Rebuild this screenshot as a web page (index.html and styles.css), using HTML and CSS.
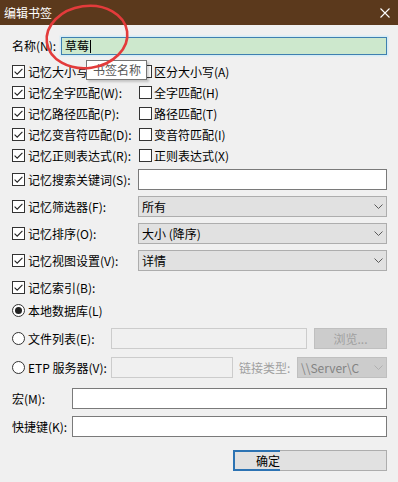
FILE: index.html
```html
<!DOCTYPE html>
<html lang="zh-CN">
<head>
<meta charset="utf-8">
<title>编辑书签</title>
<link rel="stylesheet" href="styles.css">
</head>
<body>
<div class="titlebar">
  <span class="title">编辑书签</span>
  <svg class="close" width="10" height="10" viewBox="0 0 10 10"><path d="M0.5 0.5 L9.5 9.5 M9.5 0.5 L0.5 9.5" stroke="#fff" stroke-width="1.1" fill="none"/></svg>
</div>
<div class="content">
  <div class="row name-row">
    <span class="lbl">名称(N):</span>
    <div class="field name-field"><span>草莓</span><span class="caret"></span></div>
  </div>

  <div class="row two">
    <div class="cbl"><span class="cb on"><svg viewBox="0 0 11 11"><path d="M1.6 5.6 L4.2 8.2 L9.4 2.8"/></svg></span><span>记忆大小写(C):</span></div>
    <div class="cbr"><span class="cb"></span><span>区分大小写(A)</span></div>
  </div>
  <div class="row two">
    <div class="cbl"><span class="cb on"><svg viewBox="0 0 11 11"><path d="M1.6 5.6 L4.2 8.2 L9.4 2.8"/></svg></span><span>记忆全字匹配(W):</span></div>
    <div class="cbr"><span class="cb"></span><span>全字匹配(H)</span></div>
  </div>
  <div class="row two">
    <div class="cbl"><span class="cb on"><svg viewBox="0 0 11 11"><path d="M1.6 5.6 L4.2 8.2 L9.4 2.8"/></svg></span><span>记忆路径匹配(P):</span></div>
    <div class="cbr"><span class="cb"></span><span>路径匹配(T)</span></div>
  </div>
  <div class="row two">
    <div class="cbl"><span class="cb on"><svg viewBox="0 0 11 11"><path d="M1.6 5.6 L4.2 8.2 L9.4 2.8"/></svg></span><span>记忆变音符匹配(D):</span></div>
    <div class="cbr"><span class="cb"></span><span>变音符匹配(I)</span></div>
  </div>
  <div class="row two">
    <div class="cbl"><span class="cb on"><svg viewBox="0 0 11 11"><path d="M1.6 5.6 L4.2 8.2 L9.4 2.8"/></svg></span><span>记忆正则表达式(R):</span></div>
    <div class="cbr"><span class="cb"></span><span>正则表达式(X)</span></div>
  </div>

  <div class="row two mt3">
    <div class="cbl"><span class="cb on"><svg viewBox="0 0 11 11"><path d="M1.6 5.6 L4.2 8.2 L9.4 2.8"/></svg></span><span>记忆搜索关键词(S):</span></div>
    <div class="field text-field"></div>
  </div>
  <div class="row two mt6">
    <div class="cbl"><span class="cb on"><svg viewBox="0 0 11 11"><path d="M1.6 5.6 L4.2 8.2 L9.4 2.8"/></svg></span><span>记忆筛选器(F):</span></div>
    <div class="select"><span>所有</span><svg class="chev" width="9" height="5" viewBox="0 0 9 5"><path d="M0.5 0.5 L4.5 4.5 L8.5 0.5"/></svg></div>
  </div>
  <div class="row two mt6">
    <div class="cbl"><span class="cb on"><svg viewBox="0 0 11 11"><path d="M1.6 5.6 L4.2 8.2 L9.4 2.8"/></svg></span><span>记忆排序(O):</span></div>
    <div class="select"><span>大小 (降序)</span><svg class="chev" width="9" height="5" viewBox="0 0 9 5"><path d="M0.5 0.5 L4.5 4.5 L8.5 0.5"/></svg></div>
  </div>
  <div class="row two mt6">
    <div class="cbl"><span class="cb on"><svg viewBox="0 0 11 11"><path d="M1.6 5.6 L4.2 8.2 L9.4 2.8"/></svg></span><span>记忆视图设置(V):</span></div>
    <div class="select"><span>详情</span><svg class="chev" width="9" height="5" viewBox="0 0 9 5"><path d="M0.5 0.5 L4.5 4.5 L8.5 0.5"/></svg></div>
  </div>
  <div class="row two mt6">
    <div class="cbl"><span class="cb on"><svg viewBox="0 0 11 11"><path d="M1.6 5.6 L4.2 8.2 L9.4 2.8"/></svg></span><span>记忆索引(B):</span></div>
  </div>

  <div class="row radio-row mt2">
    <div class="rbl"><span class="rb on"></span><span>本地数据库(L)</span></div>
  </div>
  <div class="row radio-row mt7">
    <div class="rbl"><span class="rb"></span><span>文件列表(E):</span></div>
    <div class="file-line">
      <div class="field dis-field grow"></div>
      <div class="dis-btn">浏览...</div>
    </div>
  </div>
  <div class="row radio-row mt8">
    <div class="rbl"><span class="rb"></span><span>ETP 服务器(V):</span></div>
    <div class="etp-line">
      <div class="field dis-field etp-field"></div>
      <span class="dis-lbl">链接类型:</span>
      <div class="select dis-select"><span>\\Server\C</span><svg class="chev" width="9" height="5" viewBox="0 0 9 5"><path d="M0.5 0.5 L4.5 4.5 L8.5 0.5"/></svg></div>
    </div>
  </div>

  <div class="row short mt10">
    <span class="lbl">宏(M):</span>
    <div class="field text-field"></div>
  </div>
  <div class="row short mt7">
    <span class="lbl">快捷键(K):</span>
    <div class="field text-field"></div>
  </div>

  <div class="btn-row">
    <div class="ok-btn"><span class="focus-part">确定</span></div>
  </div>
</div>

<div class="tooltip">书签名称</div>
<svg class="annot" width="398" height="482" viewBox="0 0 398 482">
  <ellipse cx="87" cy="37" rx="40.5" ry="31" transform="rotate(-8 87 37)"/>
</svg>
</body>
</html>
```

FILE: styles.css
```css
* { box-sizing: border-box; }

html, body {
  margin: 0;
  padding: 0;
}

body {
  width: 398px;
  height: 482px;
  overflow: hidden;
  position: relative;
  background: #f0f0f0;
  color: #000;
  font-family: "Noto Sans CJK SC", "Noto Sans", sans-serif;
  font-size: 12px;
  line-height: 1;
}

.titlebar {
  height: 25px;
  background: #5b391c;
  color: #fff;
  display: flex;
  align-items: center;
  justify-content: space-between;
  padding: 0 8px 0 4px;
}

.title { font-size: 12px; }

.close { display: block; }

.content {
  padding: 12px 11px 0 12px;
}

.row {
  display: grid;
  align-items: center;
  height: 21px;
}

.name-row {
  grid-template-columns: 49px 1fr;
  height: 18px;
  margin-bottom: 6px;
}

.two { grid-template-columns: 126px 1fr; }
.radio-row { grid-template-columns: 99px 1fr; }
.short { grid-template-columns: 60px 1fr; }

.mt2 { margin-top: 2px; }
.mt3 { margin-top: 3px; }
.mt6 { margin-top: 6px; }
.mt7 { margin-top: 7px; }
.mt8 { margin-top: 8px; }
.mt10 { margin-top: 10px; }

.lbl { white-space: nowrap; }

.field {
  height: 100%;
  border: 1px solid #7a7a7a;
  background: #fff;
}

.name-field {
  background: #cde8cd;
  border: 1px solid #3f80b0;
  box-shadow: 0 0 0 1.5px #d6ecf6;
  display: flex;
  align-items: center;
  padding-left: 3px;
  font-size: 12px;
}

.caret {
  display: inline-block;
  width: 1px;
  height: 13px;
  background: #000;
  margin-left: 1px;
}

.cbl, .cbr, .rbl {
  display: flex;
  align-items: center;
  white-space: nowrap;
}

.cbl { gap: 3px; }
.cbr { gap: 2px; padding-left: 1px; }
.rbl { gap: 3px; }

.cb {
  width: 13px;
  height: 13px;
  flex: none;
  border: 1px solid #333;
  background: #fff;
  display: flex;
  align-items: center;
  justify-content: center;
}

.cb svg {
  width: 11px;
  height: 11px;
  display: block;
}

.cb svg path {
  fill: none;
  stroke: #222;
  stroke-width: 1.1;
}

.rb {
  width: 13px;
  height: 13px;
  flex: none;
  border: 1px solid #333;
  border-radius: 50%;
  background: #fff;
  display: flex;
  align-items: center;
  justify-content: center;
}

.rb.on::after {
  content: "";
  width: 7px;
  height: 7px;
  border-radius: 50%;
  background: #222;
}

.select {
  height: 100%;
  background: #e1e1e1;
  border: 1px solid #adadad;
  display: flex;
  align-items: center;
  justify-content: space-between;
  padding: 0 3px 0 3px;
  white-space: nowrap;
}

.chev path {
  fill: none;
  stroke: #5a5a5a;
  stroke-width: 1;
}

.file-line, .etp-line {
  display: flex;
  align-items: center;
  height: 100%;
}

.file-line { gap: 7px; }

.grow { flex: 1; }

.dis-field {
  background: #f0f0f0;
  border: 1px solid #cccccc;
}

.dis-btn {
  width: 73px;
  height: 100%;
  background: #cccccc;
  border: 1px solid #bfbfbf;
  color: #a0a0a0;
  display: flex;
  align-items: center;
  justify-content: center;
}

.etp-field { width: 122px; flex: none; }

.dis-lbl {
  color: #a0a0a0;
  margin-left: 6px;
  white-space: nowrap;
}

.dis-select {
  width: 90px;
  margin-left: auto;
  background: #cccccc;
  border-color: #bfbfbf;
  color: #838383;
}

.dis-select .chev path { stroke: #b0b0b0; }

.btn-row {
  display: flex;
  justify-content: flex-end;
  margin-top: 13px;
}

.ok-btn {
  position: relative;
  width: 154px;
  height: 21px;
  background: #e1e1e1;
  border: 1px solid #adadad;
}

.focus-part {
  position: absolute;
  left: -1px;
  top: -1px;
  bottom: -1px;
  width: 47px;
  border: 2px solid #2c73b3;
  border-right: none;
  padding-left: 21px;
  display: flex;
  align-items: center;
  white-space: nowrap;
}

.tooltip {
  position: absolute;
  left: 86px;
  top: 60px;
  width: 61px;
  height: 20px;
  background: #fff;
  border: 1px solid #767676;
  color: #575757;
  padding-left: 6px;
  display: flex;
  align-items: center;
  white-space: nowrap;
  box-shadow: 2px 2px 2px rgba(0, 0, 0, 0.18);
}

.annot {
  position: absolute;
  left: 0;
  top: 0;
  pointer-events: none;
}

.annot ellipse {
  fill: none;
  stroke: #e33b3b;
  stroke-width: 2.6;
}
```
